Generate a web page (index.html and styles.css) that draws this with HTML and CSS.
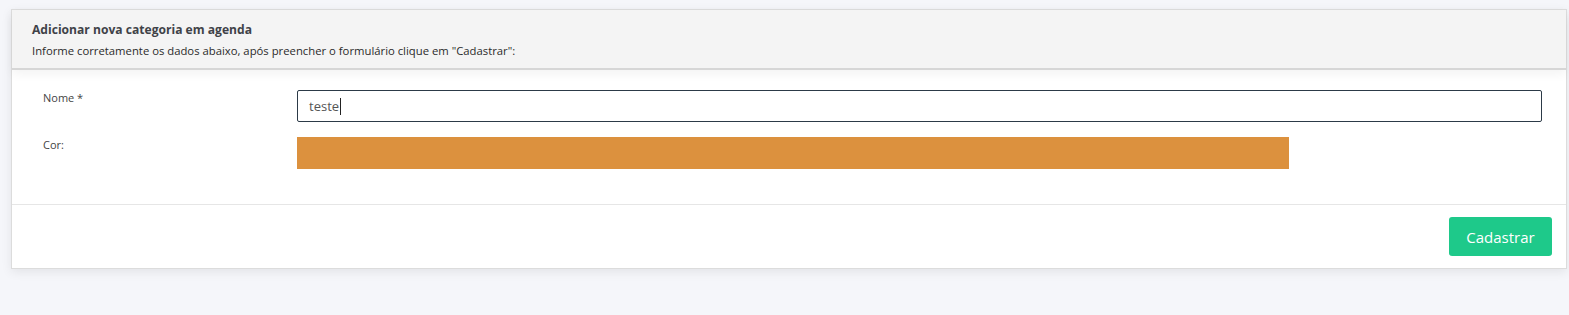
FILE: index.html
```html
<!DOCTYPE html>
<html lang="pt-BR">
<head>
<meta charset="utf-8">
<title>Adicionar nova categoria em agenda</title>
<link rel="stylesheet" href="styles.css">
</head>
<body>
<div class="card">
  <div class="card-header">
    <div class="card-title">Adicionar nova categoria em agenda</div>
    <div class="card-subtitle">Informe corretamente os dados abaixo, após preencher o formulário clique em "Cadastrar":</div>
  </div>
  <div class="card-body">
    <div class="form-row">
      <label class="form-label">Nome *</label>
      <div class="input">teste<span class="caret"></span></div>
    </div>
    <div class="form-row">
      <label class="form-label">Cor:</label>
      <div class="color-bar"></div>
    </div>
  </div>
  <div class="card-footer">
    <button class="btn-primary">Cadastrar</button>
  </div>
</div>
</body>
</html>
```

FILE: styles.css
```css
* { box-sizing: border-box; }
html, body { margin: 0; padding: 0; }
body {
  background: #f5f6fa;
  font-family: "Open Sans", "Noto Sans", sans-serif;
  color: #333;
  height: 315px;
  overflow: hidden;
}
.card {
  margin: 9px 2px 0 11px;
  background: #fff;
  border: 1px solid #dcdcdc;
  box-shadow: 0 3px 10px rgba(0, 0, 0, 0.08);
}
.card-header {
  background: #f4f4f4;
  border-bottom: 2px solid #d6d6d6;
  padding: 11px 20px 9px 20px;
  box-shadow: 0 4px 10px rgba(0, 0, 0, 0.05);
  position: relative;
}
.card-title {
  font-size: 12.1px;
  font-weight: 700;
  color: #404248;
  line-height: 18px;
}
.card-subtitle {
  font-size: 11.3px;
  color: #2b2b2b;
  line-height: 17px;
  margin-top: 3px;
}
.card-body {
  padding: 20px 24px 35px 31px;
  border-bottom: 1px solid #e6e6e6;
}
.form-row {
  display: grid;
  grid-template-columns: 254px 1fr;
  align-items: start;
}
.form-row + .form-row { margin-top: 15px; }
.form-label {
  font-size: 11px;
  color: #444;
  padding-top: 1px;
  line-height: 14px;
}
.input {
  height: 32px;
  border: 1px solid #2c3a47;
  border-radius: 2px;
  padding: 0 11px;
  font-size: 13px;
  line-height: 30px;
  color: #555;
  display: flex;
  align-items: center;
}
.caret {
  display: inline-block;
  width: 1px;
  height: 17px;
  background: #222;
  margin-left: 1px;
}
.color-bar {
  width: 79.66%;
  height: 32px;
  background: #dc913e;
}
.card-footer {
  display: flex;
  justify-content: flex-end;
  padding: 12px 14px 12px;
}
.btn-primary {
  background: #1ec98a;
  color: #fff;
  border: none;
  border-radius: 3px;
  height: 39px;
  width: 103px;
  font-family: inherit;
  font-size: 15px;
  padding: 0;
}
```
